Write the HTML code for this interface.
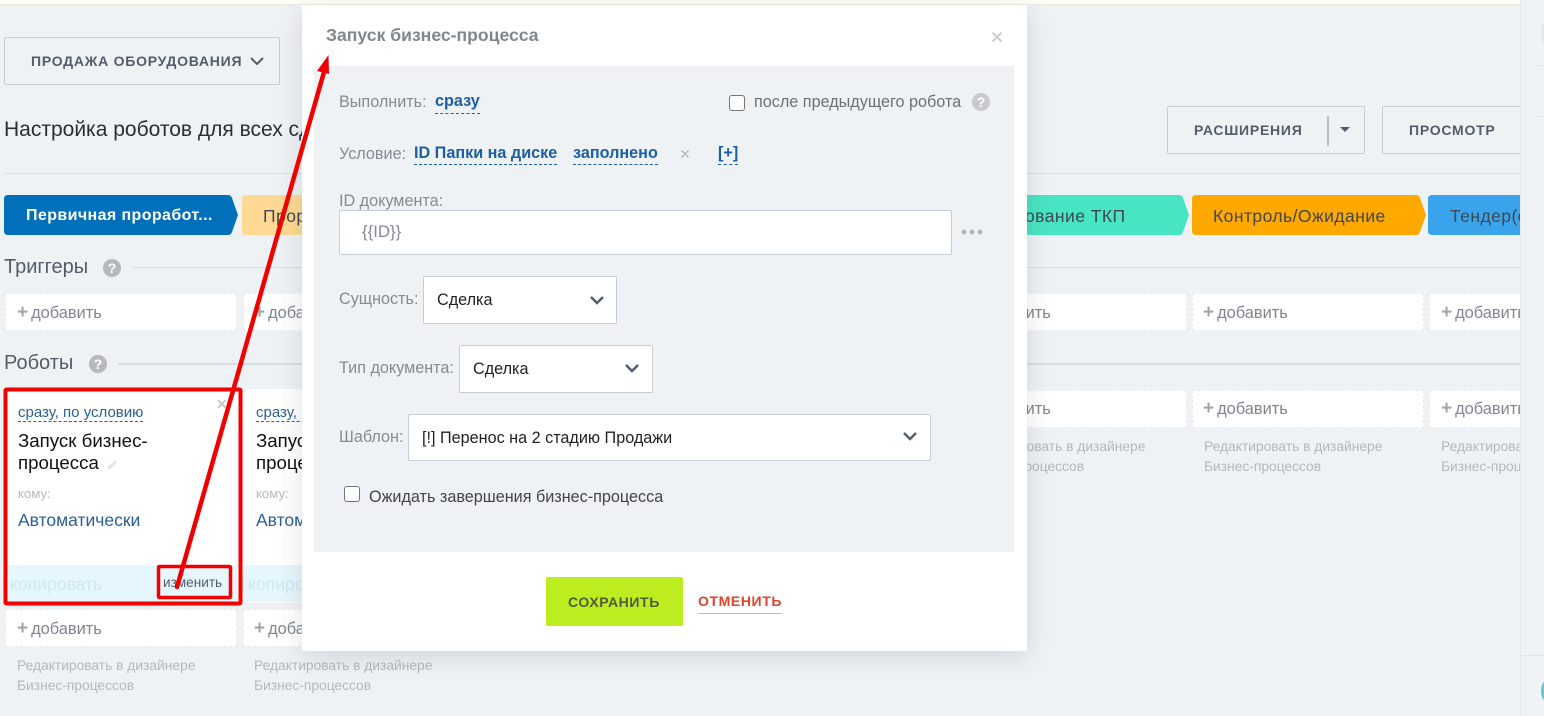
<!DOCTYPE html>
<html lang="ru"><head><meta charset="utf-8"><title>Запуск бизнес-процесса</title>
<style>
*{box-sizing:border-box}
html,body{margin:0;padding:0;width:1544px;height:716px;overflow:hidden;background:#eef2f4;font-family:"Liberation Sans",sans-serif}
.a{position:absolute}
.t{position:absolute;white-space:nowrap}
#main{position:absolute;left:0;top:0;width:1520px;height:716px;overflow:hidden}
.btn{position:absolute;border:1px solid #c6cdd3;border-radius:2px}
.bt{font-weight:bold;font-size:14px;color:#535c69;letter-spacing:.75px;line-height:20px}
.st{position:absolute;top:195px;height:40px}
.stt{position:absolute;white-space:nowrap;top:205px;line-height:20px;font-size:17.5px;color:#3f474f;letter-spacing:.45px}
.add{position:absolute;width:232px;height:38px;background:#fff;border:1px dashed #e8ebee}
.addt{position:absolute;white-space:nowrap;font-size:16.4px;line-height:20px;color:#80868e}
.addt b{font-size:19px;color:#a0a5ab;font-weight:bold;margin-right:3px;line-height:16px}
.hint{position:absolute;white-space:nowrap;font-size:13.8px;line-height:20px;color:#b3b8c0}
.sec{position:absolute;font-size:20px;line-height:24px;color:#535c69;white-space:nowrap}
.q{position:absolute;width:18px;height:18px;border-radius:50%;background:#b5b9bd;color:#fff;font-size:14px;font-weight:bold;line-height:18px;text-align:center}
.hr{position:absolute;background:#dadee2}
.title{position:absolute;white-space:nowrap;font-size:18.7px;line-height:22px;color:#111}
.kom{position:absolute;font-size:13.2px;line-height:16px;color:#b4b8bd}
.auto{position:absolute;white-space:nowrap;font-size:17.5px;line-height:20px;color:#2a6099}
.copy{position:absolute;white-space:nowrap;font-size:17.6px;line-height:22px;color:#cfe8f1}
.lab{position:absolute;white-space:nowrap;font-size:16.2px;line-height:20px;color:#858b92}
.lnk{position:absolute;white-space:nowrap;font-size:16.2px;line-height:20px;font-weight:bold;color:#1c5fa8;border-bottom:1px dashed #1c5fa8;padding-bottom:2px}
.inp{position:absolute;background:#fff;border:1px solid #c6cdd3;border-radius:2px}
.v{position:absolute;white-space:nowrap;font-size:16.2px;line-height:20px;color:#222}
.cb{position:absolute;width:16px;height:16px;background:#fff;border:1px solid #767676;border-radius:3px}
.cl{position:absolute;white-space:nowrap;font-size:15px;line-height:17px;color:#2a6099;border-bottom:1px dashed #2a6099}
</style></head><body>
<div id="main">
<div class="a" style="left:0;top:0;width:1520px;height:4px;background:#fffef9"></div>
<div class="a" style="left:0;top:4px;width:1520px;height:1px;background:#ebebdc"></div>

<div class="btn" style="left:4px;top:37px;width:276px;height:48px"></div>
<div class="t bt" style="left:31px;top:51px">ПРОДАЖА ОБОРУДОВАНИЯ</div>
<svg class="a" style="left:249px;top:55px" width="16" height="12"><path d="M2 3l6 6 6-6" fill="none" stroke="#535c69" stroke-width="2"/></svg>

<div class="t" style="left:4px;top:118px;font-size:21px;line-height:24px;color:#2b2f33">Настройка роботов для всех сделок</div>
<div class="btn" style="left:1167px;top:106px;width:198px;height:48px"></div>
<div class="t bt" style="left:1194px;top:120px">РАСШИРЕНИЯ</div>
<div class="a" style="left:1327px;top:116px;width:2px;height:30px;background:#b9bec4"></div>
<svg class="a" style="left:1339px;top:126px" width="12" height="7"><path d="M1 1h10l-5 5z" fill="#535c69"/></svg>
<div class="btn" style="left:1382px;top:106px;width:140px;height:48px"></div>
<div class="t bt" style="left:1409px;top:120px">ПРОСМОТР</div>
<div class="hr" style="left:4px;top:173px;width:1516px;height:1px"></div>

<svg class="st" style="left:4px" width="236" height="40"><path d="M4 0H224Q227 0 228 3L234 20L228 37Q227 40 224 40H4Q0 40 0 36V4Q0 0 4 0z" fill="#0070ba"/></svg>
<div class="stt" style="left:26px;top:206px;font-size:16px;color:#fff;font-weight:bold;letter-spacing:.4px">Первичная проработ...</div>
<svg class="st" style="left:242px" width="236" height="40"><path d="M4 0H224Q227 0 228 3L234 20L228 37Q227 40 224 40H4Q0 40 0 36V4Q0 0 4 0z" fill="#ffd993"/></svg>
<div class="stt" style="left:263px;top:206px">Проработка</div>
<svg class="st" style="left:955px" width="236" height="40"><path d="M4 0H224Q227 0 228 3L234 20L228 37Q227 40 224 40H4Q0 40 0 36V4Q0 0 4 0z" fill="#48e5c2"/></svg>
<div class="stt" style="left:965px;top:206px">Согласование ТКП</div>
<svg class="st" style="left:1192px" width="236" height="40"><path d="M4 0H224Q227 0 228 3L234 20L228 37Q227 40 224 40H4Q0 40 0 36V4Q0 0 4 0z" fill="#ffa900"/></svg>
<div class="stt" style="left:1213px;top:206px">Контроль/Ожидание</div>
<svg class="st" style="left:1428px" width="236" height="40"><path d="M4 0H224Q227 0 228 3L234 20L228 37Q227 40 224 40H4Q0 40 0 36V4Q0 0 4 0z" fill="#39a4ec"/></svg>
<div class="stt" style="left:1450px;top:206px">Тендер(объявлен)</div>

<div class="sec" style="left:4px;top:255px">Триггеры</div>
<div class="q" style="left:103px;top:259px">?</div>
<div class="hr" style="left:132px;top:267px;width:1388px;height:1px"></div>

<div class="add" style="left:5px;top:293px"></div><div class="addt" style="left:17px;top:303px"><b>+</b>добавить</div>
<div class="add" style="left:243px;top:293px"></div><div class="addt" style="left:254px;top:303px"><b>+</b>добавить</div>
<div class="add" style="left:955px;top:293px"></div><div class="addt" style="left:966px;top:303px"><b>+</b>добавить</div>
<div class="add" style="left:1192px;top:293px"></div><div class="addt" style="left:1203px;top:303px"><b>+</b>добавить</div>
<div class="add" style="left:1429px;top:293px"></div><div class="addt" style="left:1441px;top:303px"><b>+</b>добавить</div>

<div class="sec" style="left:4px;top:351px">Роботы</div>
<div class="q" style="left:89px;top:355px">?</div>
<div class="hr" style="left:118px;top:363px;width:1402px;height:2px"></div>

<div class="a" style="left:5px;top:389px;width:235px;height:214px;background:#fff"></div>
<div class="a" style="left:6px;top:565px;width:232px;height:37px;background:#e5f6fc"></div>
<div class="cl" style="left:18px;top:404px">сразу, по условию</div>
<div class="t" style="left:216px;top:395px;font-size:14px;line-height:18px;font-weight:bold;color:#c4c8cc">✕</div>
<div class="title" style="left:18px;top:430px">Запуск бизнес-<br>процесса</div>
<svg class="a" style="left:105px;top:458px" width="14" height="14"><path d="M2 12l1-3 7-7 2 2-7 7z" fill="#e2e4e6"/></svg>
<div class="kom" style="left:18px;top:486px">кому:</div>
<div class="auto" style="left:18px;top:510px">Автоматически</div>
<div class="copy" style="left:10px;top:573px">копировать</div>
<div class="t" style="left:163px;top:574px;font-size:13.6px;line-height:18px;color:#535c69">изменить</div>

<div class="a" style="left:243px;top:389px;width:232px;height:214px;background:#fff"></div>
<div class="a" style="left:243px;top:565px;width:232px;height:37px;background:#e5f6fc"></div>
<div class="cl" style="left:256px;top:404px">сразу, по условию</div>
<div class="title" style="left:256px;top:430px">Запуск бизнес-<br>процесса</div>
<div class="kom" style="left:256px;top:486px">кому:</div>
<div class="auto" style="left:256px;top:510px">Автоматически</div>
<div class="copy" style="left:248px;top:573px">копировать</div>

<div class="add" style="left:5px;top:609px"></div><div class="addt" style="left:17px;top:619px"><b>+</b>добавить</div>
<div class="add" style="left:243px;top:609px"></div><div class="addt" style="left:254px;top:619px"><b>+</b>добавить</div>
<div class="hint" style="left:17px;top:656px">Редактировать в дизайнере<br>Бизнес-процессов</div>
<div class="hint" style="left:254px;top:656px">Редактировать в дизайнере<br>Бизнес-процессов</div>

<div class="add" style="left:955px;top:390px"></div><div class="addt" style="left:966px;top:399px"><b>+</b>добавить</div>
<div class="add" style="left:1192px;top:390px"></div><div class="addt" style="left:1203px;top:399px"><b>+</b>добавить</div>
<div class="add" style="left:1429px;top:390px"></div><div class="addt" style="left:1441px;top:399px"><b>+</b>добавить</div>
<div class="hint" style="left:967px;top:437px">Редактировать в дизайнере<br>Бизнес-процессов</div>
<div class="hint" style="left:1204px;top:437px">Редактировать в дизайнере<br>Бизнес-процессов</div>
<div class="hint" style="left:1441px;top:437px">Редактировать в дизайнере<br>Бизнес-процессов</div>
</div>

<div class="a" style="left:1520px;top:0;width:24px;height:716px;background:#f0f3f5;border-left:1px solid #e6e9ec"></div>
<div class="a" style="left:1535px;top:65px;width:9px;height:1px;background:#e3e6e9"></div>
<div class="a" style="left:1535px;top:116px;width:9px;height:1px;background:#e3e6e9"></div>
<div class="a" style="left:1521px;top:655px;width:23px;height:1px;background:#e3e6e9"></div>
<div class="a" style="left:1541px;top:681px;width:10px;height:20px;border-radius:50%;background:#63c8d4"></div>
<div class="a" style="left:1541px;top:20px;width:10px;height:26px;border-radius:50%;background:#e6e9ec"></div>

<!-- modal -->
<div class="a" style="left:302px;top:5px;width:725px;height:646px;background:#fff;box-shadow:0 6px 24px rgba(60,70,80,.16)"></div>
<div class="a" style="left:314px;top:66px;width:700px;height:486px;background:#eef2f4"></div>
<div class="t" style="left:326px;top:25px;font-size:17.6px;line-height:20px;font-weight:bold;color:#80868e">Запуск бизнес-процесса</div>
<svg class="a" style="left:991px;top:31px" width="12" height="12"><path d="M1.5 1.5l9 9M10.5 1.5l-9 9" stroke="#c9cdd1" stroke-width="2"/></svg>

<div class="lab" style="left:339px;top:92px">Выполнить:</div>
<div class="lnk" style="left:435px;top:91px">сразу</div>
<div class="cb" style="left:729px;top:95px"></div>
<div class="t" style="left:754px;top:92px;font-size:16.2px;line-height:20px;color:#6b7178">после предыдущего робота</div>
<div class="q" style="left:972px;top:93px;background:#c7cacd">?</div>

<div class="lab" style="left:339px;top:144px">Условие:</div>
<div class="lnk" style="left:414px;top:143px;padding-bottom:1px">ID Папки на диске</div>
<div class="lnk" style="left:573px;top:143px;padding-bottom:1px">заполнено</div>
<svg class="a" style="left:681px;top:150px" width="8" height="8"><path d="M0.5 0.5l7 7M7.5 0.5l-7 7" stroke="#b0b5ba" stroke-width="1.3"/></svg>
<div class="lnk" style="left:718px;top:143px;padding-bottom:1px">[+]</div>

<div class="lab" style="left:339px;top:191px">ID документа:</div>
<div class="inp" style="left:339px;top:210px;width:613px;height:45px"></div>
<div class="t" style="left:362px;top:222px;font-size:16.8px;line-height:20px;color:#858b92">{{ID}}</div>
<svg class="a" style="left:960px;top:228px" width="24" height="8"><g fill="#b5b9bd"><circle cx="4" cy="4" r="2.5"/><circle cx="12" cy="4" r="2.5"/><circle cx="20" cy="4" r="2.5"/></g></svg>

<div class="lab" style="left:339px;top:289px">Сущность:</div>
<div class="inp" style="left:423px;top:276px;width:194px;height:48px"></div>
<div class="v" style="left:437px;top:290px">Сделка</div>
<svg class="a" style="left:589px;top:295px" width="16" height="12"><path d="M2 2l6 6 6-6" fill="none" stroke="#535c69" stroke-width="2.4"/></svg>

<div class="lab" style="left:339px;top:358px">Тип документа:</div>
<div class="inp" style="left:459px;top:345px;width:194px;height:48px"></div>
<div class="v" style="left:473px;top:359px">Сделка</div>
<svg class="a" style="left:624px;top:363px" width="16" height="12"><path d="M2 2l6 6 6-6" fill="none" stroke="#535c69" stroke-width="2.4"/></svg>

<div class="lab" style="left:339px;top:427px">Шаблон:</div>
<div class="inp" style="left:408px;top:414px;width:523px;height:47px"></div>
<div class="v" style="left:422px;top:428px">[!] Перенос на 2 стадию Продажи</div>
<svg class="a" style="left:902px;top:431px" width="16" height="12"><path d="M2 2l6 6 6-6" fill="none" stroke="#535c69" stroke-width="2.4"/></svg>

<div class="cb" style="left:344px;top:486px"></div>
<div class="t" style="left:369px;top:487px;font-size:16.2px;line-height:20px;color:#444">Ожидать завершения бизнес-процесса</div>

<div class="a" style="left:546px;top:577px;width:137px;height:49px;background:#bbed21;border-radius:2px"></div>
<div class="t" style="left:568px;top:592px;font-size:14px;line-height:20px;font-weight:bold;color:#535c3a;letter-spacing:.6px">СОХРАНИТЬ</div>
<div class="t" style="left:698px;top:591px;font-size:14px;line-height:20px;font-weight:bold;color:#e5412d;letter-spacing:.6px;border-bottom:1px solid #f0a79d;padding-bottom:2px">ОТМЕНИТЬ</div>

<!-- annotations -->
<svg class="a" style="left:0;top:0" width="1544" height="716">
<rect x="5.5" y="389.5" width="235" height="214" fill="none" stroke="#f00000" stroke-width="4" rx="1"/>
<rect x="158.5" y="566.5" width="72" height="31" fill="none" stroke="#f00000" stroke-width="3.5" rx="1"/>
<path d="M177 587L324 72" stroke="#f00000" stroke-width="4.5" fill="none" stroke-linecap="round"/>
<path d="M328.5 55L317 71L329 74z" fill="#f00000"/>
</svg>
</body></html>
